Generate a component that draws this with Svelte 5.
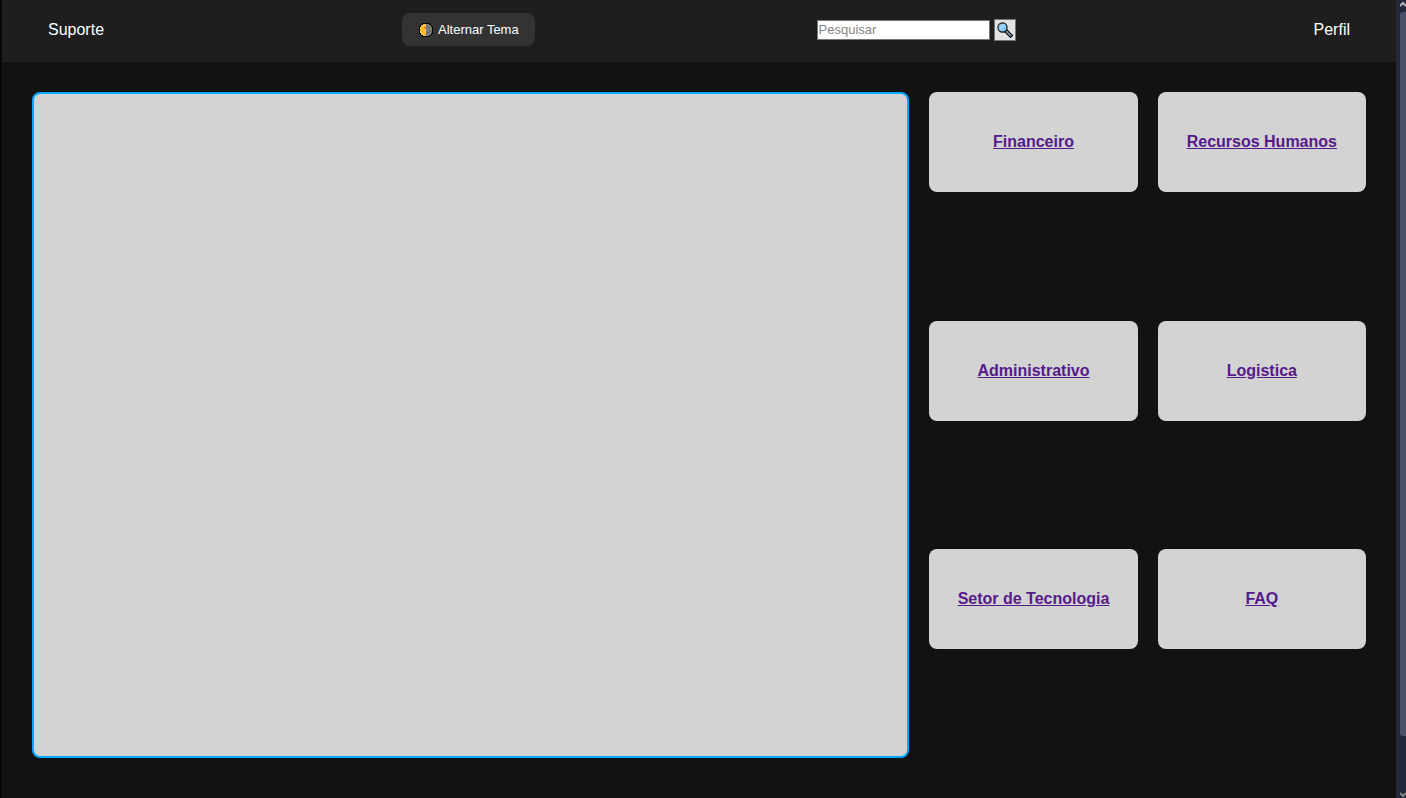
<script>
  const sectors = ['Financeiro', 'Recursos Humanos', 'Administrativo', 'Logistica', 'Setor de Tecnologia', 'FAQ'];
  let query = $state('');
  let light = $state(false);
</script>

<div class="window" class:light>
  <div class="page">
    <header>
      <a class="nav" href="#suporte">Suporte</a>
      <button class="theme" type="button" onclick={() => (light = !light)}>
        <svg width="16" height="16" viewBox="0 0 16 16" shape-rendering="crispEdges" aria-hidden="true">
          <circle cx="8" cy="8" r="7.5" fill="#080808" />
          <circle cx="8" cy="8" r="6.5" fill="#777a80" />
          <path d="M8 1.5a6.5 6.5 0 0 0 0 13z" fill="#ffc12f" />
          <path d="M7 4h1v3H6V5h1zM4 9h1v1H4zM6 12h2v1H6z" fill="#dc9712" />
          <path d="M10 5h2v1h-2zM9 10h2v1H9zM12 8h1v2h-1z" fill="#5c6066" />
        </svg>
        <span>Alternar Tema</span>
      </button>
      <form onsubmit={(e) => e.preventDefault()}>
        <input type="text" placeholder="Pesquisar" aria-label="Pesquisar" bind:value={query} />
        <button class="search" type="submit" aria-label="Buscar">
          <svg width="18" height="18" viewBox="0 0 18 18" aria-hidden="true">
            <path d="M9.500 9.500l5 5" stroke="#080808" stroke-width="4" stroke-linecap="square" />
            <path d="M10.500 10.500l4 4" stroke="#78909c" stroke-width="1.800" stroke-linecap="square" />
            <circle cx="6.500" cy="6.500" r="4.600" fill="#83c8f5" stroke="#080808" stroke-width="1.100" />
            <path d="M3.500 7.500L7.500 3l1.500 1L4.500 9z" fill="#b4dcf8" />
          </svg>
        </button>
      </form>
      <a class="nav" href="#perfil">Perfil</a>
    </header>
    <main>
      <section class="panel" aria-label="Destaques"></section>
      <nav class="cards" aria-label="Setores">
        {#each sectors as name, i}
          <div class="card"><a href={`#setor-${i}`}>{name}</a></div>
        {/each}
      </nav>
    </main>
  </div>
  <div class="rail" aria-hidden="true">
    <svg width="6" height="6" viewBox="0 0 6 6"><path d="M0 5l3-3 3 3" fill="none" stroke="#b4b4b4" stroke-width="2" /></svg>
    <div class="track"><div class="thumb"></div></div>
    <svg width="6" height="6" viewBox="0 0 6 6"><path d="M0 1l3 3 3-3" fill="none" stroke="#858585" stroke-width="2" /></svg>
  </div>
</div>

<style>
  :global(body) {
    margin: 0;
    background: #121212;
  }
  .window {
    display: flex;
    box-sizing: border-box;
    min-height: 100vh;
    border-left: 2px solid #080808;
    background: #121212;
    font-family: "Liberation Sans", Arial, sans-serif;
    font-size: 16px;
  }
  .page {
    flex: 1;
    display: flex;
    flex-direction: column;
  }
  header {
    display: flex;
    justify-content: space-between;
    align-items: center;
    padding: 13px 30px 16px;
    background: #1e1e1e;
  }
  .nav {
    padding: 0 16px;
    color: #fff;
    text-decoration: none;
  }
  button,
  input {
    font-family: inherit;
    font-size: 13px;
  }
  .theme {
    display: flex;
    align-items: center;
    gap: 4px;
    height: 33px;
    padding: 0 16px;
    border: 0;
    border-radius: 8px;
    background: #333;
    color: #fff;
    cursor: pointer;
  }
  form {
    display: flex;
    align-items: center;
    gap: 4px;
  }
  input {
    box-sizing: border-box;
    width: 173px;
    height: 20px;
    padding: 1px;
    border: 1px solid #767676;
    background: #fff;
  }
  input::placeholder {
    color: #858585;
  }
  .search {
    display: flex;
    align-items: center;
    justify-content: center;
    box-sizing: border-box;
    width: 22px;
    height: 22px;
    padding: 0;
    border: 1px solid #767676;
    background: #e3e3e3;
  }
  main {
    flex: 1;
    display: flex;
    gap: 20px;
    padding: 30px 30px 40px;
  }
  .panel {
    flex: 2;
    border: 2px solid #00a8ff;
    border-radius: 8px;
    background: #d3d3d3;
  }
  .cards {
    flex: 1;
    display: grid;
    grid-template-columns: 1fr 1fr;
    grid-template-rows: repeat(3, 1fr);
    gap: 20px;
    align-items: start;
  }
  .card {
    display: flex;
    align-items: center;
    justify-content: center;
    height: 100px;
    border-radius: 8px;
    background: #d3d3d3;
  }
  .card a {
    color: #551a8b;
    font-weight: bold;
  }
  .rail {
    display: flex;
    flex-direction: column;
    align-items: flex-end;
    width: 10px;
    background: #22283a;
  }
  .rail svg {
    margin-top: 1px;
  }
  .track {
    flex: 1;
    width: 6px;
    padding-top: 5px;
  }
  .thumb {
    height: 93%;
    border-radius: 3px 0 0 3px;
    background: #4b5069;
  }
  .light,
  .light header {
    background: #f4f4f4;
  }
  .light .nav {
    color: #121212;
  }
</style>
